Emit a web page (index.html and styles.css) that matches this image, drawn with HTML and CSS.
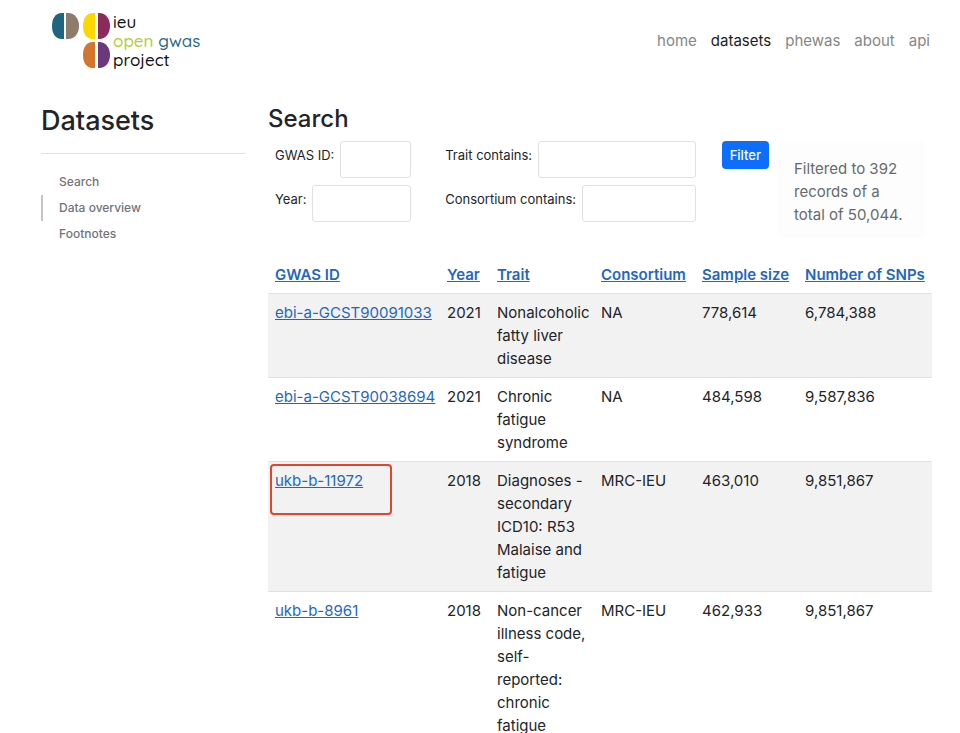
FILE: index.html
```html
<!DOCTYPE html>
<html lang="en">
<head>
<meta charset="utf-8">
<meta name="viewport" content="width=device-width, initial-scale=1">
<title>Datasets - IEU OpenGWAS project</title>
<link rel="stylesheet" href="styles.css">
</head>
<body>
<header class="topbar">
  <a class="brand" href="#">
    <svg class="brand-mark" viewBox="0 0 60 56" width="60" height="56" aria-hidden="true">
      <path fill="#1f657f" d="M13 1v26H11C4 27 1 21 1 14S4 1 11 1z"/>
      <path fill="#8d7b6c" d="M15 1v26h2c7 0 11-6 11-13S24 1 17 1z"/>
      <path fill="#fbd800" d="M44 1v26h-2c-7 0-10-6-10-13S35 1 42 1z"/>
      <path fill="#8b2a5b" d="M47 1v26h1c7 0 11-6 11-13S55 1 48 1z"/>
      <path fill="#d3742f" d="M44 30v26h-2c-7 0-10-6-10-13s3-13 10-13z"/>
      <path fill="#6c387d" d="M47 30v26h1c7 0 11-6 11-13s-4-13-11-13z"/>
    </svg>
    <span class="brand-text">
      <span>ieu</span>
      <span><span class="lime">open</span> <span class="teal">gwas</span></span>
      <span>project</span>
    </span>
  </a>
  <nav class="nav" aria-label="Main">
    <a href="#">home</a>
    <a class="active" href="#" aria-current="page">datasets</a>
    <a href="#">phewas</a>
    <a href="#">about</a>
    <a href="#">api</a>
  </nav>
</header>
<div class="layout">
  <aside class="sidebar">
    <h1>Datasets</h1>
    <nav class="toc" aria-label="Sections">
      <a href="#search">Search</a>
      <a class="current" href="#overview">Data overview</a>
      <a href="#footnotes">Footnotes</a>
    </nav>
  </aside>
  <main>
    <h2 id="search">Search</h2>
    <form class="filters">
      <div class="fields">
        <div class="field"><label for="gwas-id">GWAS ID:</label><input id="gwas-id" type="text"></div>
        <div class="field"><label for="year">Year:</label><input id="year" type="text"></div>
      </div>
      <div class="fields wide">
        <div class="field"><label for="trait">Trait contains:</label><input id="trait" type="text"></div>
        <div class="field"><label for="consortium">Consortium contains:</label><input id="consortium" type="text"></div>
      </div>
      <button type="submit">Filter</button>
      <p class="summary">Filtered to 392 records of a total of 50,044.</p>
    </form>
    <table id="overview">
      <colgroup>
        <col class="c-id"><col class="c-year"><col class="c-trait"><col class="c-cons"><col class="c-size"><col class="c-snps">
      </colgroup>
      <thead>
        <tr>
          <th><a href="#">GWAS ID</a></th>
          <th><a href="#">Year</a></th>
          <th><a href="#">Trait</a></th>
          <th><a href="#">Consortium</a></th>
          <th><a href="#">Sample size</a></th>
          <th><a href="#">Number of SNPs</a></th>
        </tr>
      </thead>
      <tbody>
        <tr>
          <td><a href="#">ebi-a-GCST90091033</a></td>
          <td>2021</td><td>Nonalcoholic fatty liver disease</td><td>NA</td><td>778,614</td><td>6,784,388</td>
        </tr>
        <tr>
          <td><a href="#">ebi-a-GCST90038694</a></td>
          <td>2021</td><td>Chronic fatigue syndrome</td><td>NA</td><td>484,598</td><td>9,587,836</td>
        </tr>
        <tr>
          <td class="marked"><a href="#">ukb-b-11972</a></td>
          <td>2018</td><td>Diagnoses - secondary ICD10: R53 Malaise and fatigue</td><td>MRC-IEU</td><td>463,010</td><td>9,851,867</td>
        </tr>
        <tr>
          <td><a href="#">ukb-b-8961</a></td>
          <td>2018</td><td>Non-cancer illness code, self-reported: chronic fatigue</td><td>MRC-IEU</td><td>462,933</td><td>9,851,867</td>
        </tr>
      </tbody>
    </table>
  </main>
</div>
</body>
</html>
```
FILE: styles.css
```css
* { box-sizing: border-box; }

body {
  margin: 0;
  height: 100vh;
  overflow: hidden;
  background: #fff;
  color: #212529;
  font: 15px/23px Inter, "Liberation Sans", sans-serif;
}

h1, h2, p { margin: 0; }

.topbar {
  display: flex;
  justify-content: space-between;
  padding: 12px 30px 0 51px;
}

.brand {
  display: flex;
  gap: 2px;
  color: #111;
  text-decoration: none;
}

.brand-text {
  display: flex;
  flex-direction: column;
  font: 500 17px/19px Quicksand, Lato, sans-serif;
}

.lime { color: #b5cc3a; }
.teal { color: #2b6a86; }

.nav {
  display: flex;
  gap: 14px;
  padding-top: 17px;
}

.nav a {
  color: #868686;
  text-decoration: none;
}

.nav .active { color: #1c1c1c; }

.layout {
  display: grid;
  grid-template-columns: minmax(0, 204fr) minmax(0, 664fr);
  gap: 23px;
  padding: 33px 28px 0 41px;
}

h1 {
  padding: 2px 0 16px;
  border-bottom: 1px solid #dee0e2;
  font-size: 27px;
  line-height: 33px;
  font-weight: 500;
}

.toc {
  display: flex;
  flex-direction: column;
  margin-top: 15px;
}

.toc a {
  padding-left: 16px;
  border-left: 2px solid transparent;
  color: #727479;
  font-size: 12px;
  line-height: 26px;
  font-weight: 500;
  text-decoration: none;
}

.toc .current { border-left-color: #c3c4c8; }

h2 {
  font-size: 24px;
  line-height: 33px;
  font-weight: 500;
}

.filters {
  display: flex;
  align-items: flex-start;
  margin-top: 6px;
  padding: 0 7px;
}

.fields {
  display: flex;
  flex: 136;
  flex-direction: column;
  gap: 7px;
  min-width: 0;
  font-size: 13px;
}

.fields.wide {
  flex: 250;
  margin: 0 26px 0 34px;
}

.field {
  display: flex;
  gap: 6px;
}

label {
  line-height: 28px;
  white-space: nowrap;
}

input {
  flex: 1;
  min-width: 0;
  height: 37px;
  padding: 5px 10px;
  border: 1px solid #dee2e6;
  border-radius: 3px;
  background: #fff;
  font: inherit;
}

button {
  padding: 0 8px;
  border: 0;
  border-radius: 4px;
  background: #0d6efd;
  color: #fff;
  font: 500 13px/28px Inter, sans-serif;
}

.summary {
  width: 147px;
  margin-left: 9px;
  padding: 16px 16px 12px;
  border-radius: 4px;
  background: #fdfdfd;
  color: #666a6e;
}

table {
  width: 100%;
  margin-top: 18px;
  table-layout: fixed;
  border-collapse: separate;
  border-spacing: 0;
}

.c-id { width: 172px; }
.c-year { width: 50px; }
.c-trait { width: 104px; }
.c-cons { width: 101px; }
.c-size { width: 103px; }
.c-snps { width: auto; }

th, td {
  padding: 7px;
  border-bottom: 1px solid #dee2e6;
  text-align: left;
  vertical-align: top;
}

th {
  font-weight: 600;
  white-space: nowrap;
}

table a {
  color: #1f67c0;
  white-space: nowrap;
}

tbody tr:nth-child(odd) { background: #f2f2f2; }

.marked { position: relative; }

.marked::after {
  content: "";
  position: absolute;
  top: 2px;
  left: 2px;
  width: 118px;
  height: 47px;
  border: 2px solid #e2452f;
  border-radius: 4px;
  pointer-events: none;
}
```
